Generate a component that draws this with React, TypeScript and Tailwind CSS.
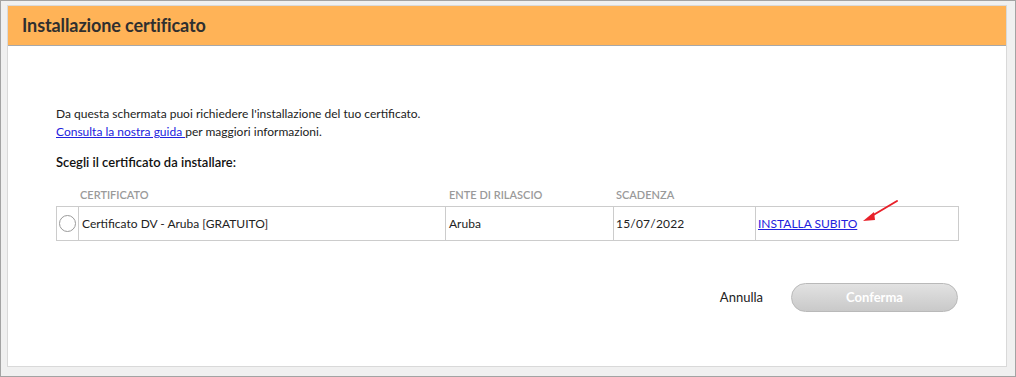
import React from "react";

const font = { fontFamily: "Lato, 'Open Sans', Arial, sans-serif" };

function RedArrow() {
  return (
    <svg width="40" height="26" viewBox="0 0 40 26" className="absolute left-[860px] top-[197px]">
      <line x1="36" y1="3" x2="9" y2="19" stroke="#e8212a" strokeWidth="2" strokeLinecap="round" />
      <path d="M2 23 L13 14 L14 22 Z" fill="#e8212a" />
    </svg>
  );
}

export default function App() {
  return (
    <div
      style={font}
      className="relative w-[1016px] h-[377px] bg-[#f0f0f0] border border-[#a3a3a3] pt-[4px] pl-[6px] pr-[8px] pb-[9px]"
    >
      <div className="h-full bg-white border border-[#d9d9d9] flex flex-col">
        {/* Header */}
        <div className="h-[40px] bg-[#ffb357] border-b border-[#a8a8a8] flex items-center pl-[14px]">
          <h1 className="text-[18px] font-bold text-[#2f2f2f] tracking-[-0.1px]">Installazione certificato</h1>
        </div>

        <div className="pl-[48px] pr-[47px] pt-[59px]">
          <p className="text-[12px] leading-[18px] text-[#222]">
            Da questa schermata puoi richiedere l'installazione del tuo certificato.
          </p>
          <p className="text-[12px] leading-[18px] text-[#222]">
            <a href="#" className="text-[#2222dd] underline">Consulta la nostra guida </a>per maggiori informazioni.
          </p>
          <p className="mt-[12px] text-[13px] leading-[18px] text-[#111] font-semibold">
            Scegli il certificato da installare:
          </p>

          {/* Table */}
          <div className="mt-[16px] flex text-[11px] text-[#9a9a9a] font-semibold uppercase h-[19px] items-start">
            <div className="w-[23px]" />
            <div className="w-[367px] pl-[1px]">Certificato</div>
            <div className="w-[168px] pl-[3px]">Ente di rilascio</div>
            <div className="w-[142px] pl-[2px]">Scadenza</div>
            <div className="flex-1" />
          </div>
          <div className="flex h-[35px] border border-[#cccccc] text-[12px] text-[#222]">
            <div className="w-[22px] border-r border-[#cccccc] flex items-center justify-center">
              <span className="w-[17px] h-[17px] rounded-full border border-[#9a9a9a] bg-white" />
            </div>
            <div className="w-[367px] border-r border-[#cccccc] flex items-center pl-[3px]">
              Certificato DV - Aruba [GRATUITO]
            </div>
            <div className="w-[168px] border-r border-[#cccccc] flex items-center pl-[3px]">Aruba</div>
            <div className="w-[142px] border-r border-[#cccccc] flex items-center pl-[2px] tracking-[0.2px]">15/07/2022</div>
            <div className="flex-1 flex items-center pl-[2px]">
              <a href="#" className="text-[#2222dd] underline">INSTALLA SUBITO</a>
            </div>
          </div>

          {/* Actions */}
          <div className="mt-[42px] flex justify-end items-center gap-[28px] pr-[1px]">
            <button className="text-[13px] text-[#222]">Annulla</button>
            <button className="w-[167px] h-[29px] rounded-full border border-[#b9b9b9] bg-gradient-to-b from-[#e2e2e2] to-[#c9c9c9] text-white text-[13px] font-bold">
              Conferma
            </button>
          </div>
        </div>
      </div>
      <RedArrow />
    </div>
  );
}
